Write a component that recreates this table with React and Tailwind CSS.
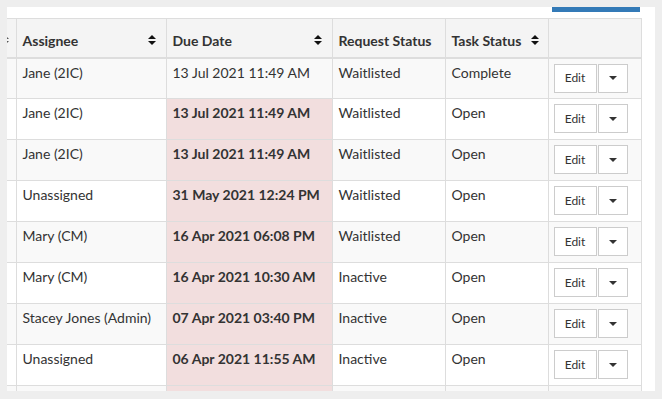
const ROWS = [
  { who: 'Jane (2IC)', due: '13 Jul 2021 11:49 AM', late: false, req: 'Waitlisted', task: 'Complete' },
  { who: 'Jane (2IC)', due: '13 Jul 2021 11:49 AM', late: true, req: 'Waitlisted', task: 'Open' },
  { who: 'Jane (2IC)', due: '13 Jul 2021 11:49 AM', late: true, req: 'Waitlisted', task: 'Open' },
  { who: 'Unassigned', due: '31 May 2021 12:24 PM', late: true, req: 'Waitlisted', task: 'Open' },
  { who: 'Mary (CM)', due: '16 Apr 2021 06:08 PM', late: true, req: 'Waitlisted', task: 'Open' },
  { who: 'Mary (CM)', due: '16 Apr 2021 10:30 AM', late: true, req: 'Inactive', task: 'Open' },
  { who: 'Stacey Jones (Admin)', due: '07 Apr 2021 03:40 PM', late: true, req: 'Inactive', task: 'Open' },
  { who: 'Unassigned', due: '06 Apr 2021 11:55 AM', late: true, req: 'Inactive', task: 'Open' },
  // next row is scrolled past the bottom edge, only its top shows
  { who: '', due: '', late: true, req: '', task: '', peek: true },
]

function SortIcon({ clip }) {
  if (clip) {
    return (
      <svg width="2" height="10" viewBox="6 0 2 10" className="block">
        <path d="M0 4 L4 0 L8 4 Z M0 6 L8 6 L4 10 Z" fill="#555" />
      </svg>
    )
  }
  return (
    <svg width="8" height="10" viewBox="0 0 8 10" className="block shrink-0">
      <path d="M0 4 L4 0 L8 4 Z M0 6 L8 6 L4 10 Z" fill="#111" />
    </svg>
  )
}

function Th({ children, sort }) {
  return (
    <th className="h-[39px] px-[6px] pb-[6px] align-bottom text-left font-bold text-[14px] bg-[#f4f4f4] border-t border-b-2 border-r border-[#dddddd]">
      <div className="flex items-center justify-between pr-[4px]">
        <span className="whitespace-nowrap">{children}</span>
        {sort && <SortIcon />}
      </div>
    </th>
  )
}

const cell = 'h-[41px] px-[6px] pt-[3px] align-top whitespace-nowrap border-r border-b border-[#dddddd]'

export default function App() {
  return (
    <div className="min-h-[399px] bg-[#eeeeee] pt-[7px] pl-[7px]" style={{ fontFamily: 'Lato, "Open Sans", sans-serif' }}>
      <div className="w-[648px] h-[384px] bg-white overflow-hidden">
        <div className="flex justify-end pr-[15px]">
          <div className="h-[5px] w-[88px] bg-[#337ab7]" />
        </div>
        <table className="mt-[6px] table-fixed border-collapse w-[634px] text-[#333333]">
          <colgroup>
            <col className="w-[9px]" />
            <col className="w-[150px]" />
            <col className="w-[166px]" />
            <col className="w-[113px]" />
            <col className="w-[103px]" />
            <col className="w-[93px]" />
          </colgroup>
          <thead>
            <tr>
              <th className="h-[39px] pb-[12px] align-bottom bg-[#f4f4f4] border-t border-b-2 border-r border-[#dddddd]">
                <div className="flex justify-start"><SortIcon clip /></div>
              </th>
              <Th sort>Assignee</Th>
              <Th sort>Due Date</Th>
              <Th>Request Status</Th>
              <Th sort>
                <span className="mr-[10px]">Task Status</span>
              </Th>
              <Th />
            </tr>
          </thead>
          <tbody className="text-[14px]">
            {ROWS.map((r, i) => {
              const bg = i % 2 === 0 ? 'bg-[#f9f9f9]' : 'bg-white'
              return (
                <tr key={i} className={bg}>
                  <td className="h-[41px] border-r border-b border-[#dddddd]" />
                  <td className={cell}>{r.who}</td>
                  <td className={`${cell} ${r.late ? 'bg-[#f2dede] font-bold' : ''}`}>{r.due}</td>
                  <td className={cell}>{r.req}</td>
                  <td className={cell}>{r.task}</td>
                  <td className="h-[41px] pl-[5px] pt-[5px] pb-[5px] align-top border-r border-b border-[#dddddd]">
                    <div className="flex">
                      <button className="h-[29px] w-[43px] bg-white border border-[#cccccc] text-[12px] text-[#333333] flex items-center justify-center">
                        {r.peek ? '' : 'Edit'}
                      </button>
                      <button className="h-[29px] w-[30px] bg-white border border-[#cccccc] ml-[1px] flex items-center justify-center">
                        <svg width="8" height="4" viewBox="0 0 8 4"><path d="M0 0 L8 0 L4 4 Z" fill="#333" /></svg>
                      </button>
                    </div>
                  </td>
                </tr>
              )
            })}
          </tbody>
        </table>
      </div>
    </div>
  )
}
